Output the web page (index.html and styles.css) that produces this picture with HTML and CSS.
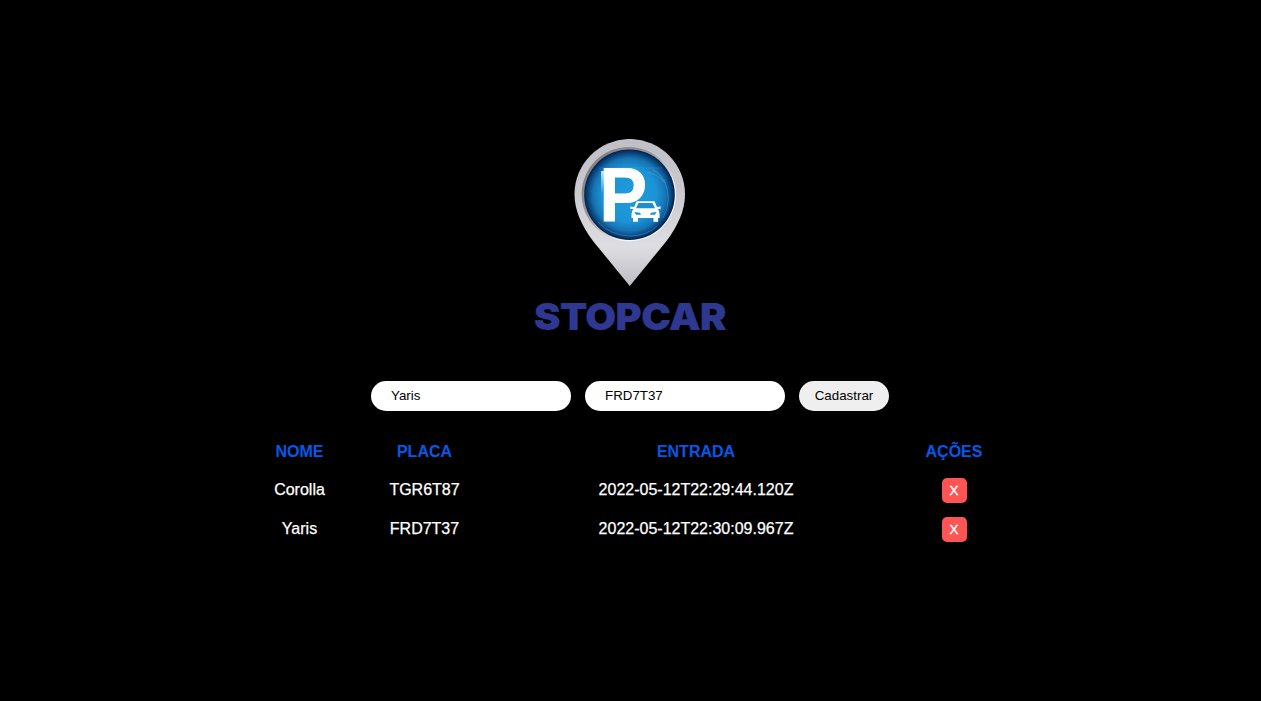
FILE: index.html
```html
<!DOCTYPE html>
<html lang="pt-BR">
<head>
<meta charset="utf-8">
<title>Stopcar</title>
<link rel="stylesheet" href="styles.css">
</head>
<body>
<main class="page">
  <svg class="logo" viewBox="0 0 200 200" role="img" aria-label="Stopcar">
    <defs>
      <linearGradient id="pin" x1="0" y1="0" x2="0" y2="1">
        <stop offset="0" stop-color="#bfbfc5"/>
        <stop offset=".35" stop-color="#c9c9cf"/>
        <stop offset=".73" stop-color="#dedee2"/>
        <stop offset="1" stop-color="#bdbdc4"/>
      </linearGradient>
      <radialGradient id="disc">
        <stop offset="0" stop-color="#209bdd"/>
        <stop offset=".6" stop-color="#1c93d5"/>
        <stop offset=".8" stop-color="#1674b5"/>
        <stop offset=".94" stop-color="#083c71"/>
        <stop offset="1" stop-color="#031f49"/>
      </radialGradient>
      <linearGradient id="bevel" x1="0" y1="0" x2="1" y2="1">
        <stop offset="0" stop-color="#77777c"/>
        <stop offset=".4" stop-color="#98989d"/>
        <stop offset=".7" stop-color="#f4f4f6"/>
        <stop offset="1" stop-color="#fff"/>
      </linearGradient>
      <linearGradient id="shine" x1="0" y1="0" x2="0" y2="1">
        <stop offset="0" stop-color="#bce5fa"/>
        <stop offset="1" stop-color="#209bdd"/>
      </linearGradient>
    </defs>
    <path fill="url(#pin)" d="M99.800 147L63 102C52 87 44.500 72 44.500 55.200A55.250 55.250 0 0 1 155 55.200C155 72 147.500 87 136.500 102Z"/>
    <circle cx="98.800" cy="55.200" r="47.200" fill="url(#bevel)"/>
    <circle cx="99.500" cy="55.700" r="45.300" fill="url(#disc)"/>
    <g fill="none" stroke="#64b7e3" stroke-width=".5" opacity=".75">
      <path d="M68 83Q80 96 99 97Q117 97 127 87M134 40Q143 61 133 79M117 33Q129 36 135 44M123 31Q131 35 134 43"/>
      <path d="M69 29H132" opacity=".5"/>
    </g>
    <path fill="url(#shine)" d="M71 32H74V45L72 55L71 52Z"/>
    <text class="mark" x="69.600" y="82.300" textLength="47.500" lengthAdjust="spacingAndGlyphs">P</text>
    <g>
      <path fill="#fff" stroke="#1b8fcf" stroke-width="1" paint-order="stroke" d="M106.500 62.300H124.500L127 68L130.500 67.500V70H128Q129.500 72 129.500 75V79H128V82.700H123.500V79H108V82.700H103V79H101.500V75Q101.500 72 103.500 70H100.300V67.500L104.200 68Z"/>
      <path fill="#1b8fcf" d="M108.500 64H122.500L125 69.300H106ZM104.500 73L110 73.700L111 75.700H106ZM126.500 73L121 73.700L120 75.700H125Z"/>
    </g>
    <text class="brand" x="4" y="191" textLength="192" lengthAdjust="spacingAndGlyphs">STOPCAR</text>
  </svg>
  <form class="entry">
    <input class="field" type="text" value="Yaris" aria-label="Nome">
    <input class="field" type="text" value="FRD7T37" aria-label="Placa">
    <button class="submit" type="button">Cadastrar</button>
  </form>
  <section class="list">
    <div class="row head"><span>NOME</span><span>PLACA</span><span>ENTRADA</span><span>AÇÕES</span></div>
    <div class="row"><span>Corolla</span><span>TGR6T87</span><span>2022-05-12T22:29:44.120Z</span><button class="remove" type="button">X</button></div>
    <div class="row"><span>Yaris</span><span>FRD7T37</span><span>2022-05-12T22:30:09.967Z</span><button class="remove" type="button">X</button></div>
  </section>
</main>
</body>
</html>
```
FILE: styles.css
```css
* { box-sizing: border-box; }
body {
  margin: 0;
  background: #000;
  color: #fff;
  font: 16px "Liberation Sans", Arial, sans-serif;
}
.page {
  min-height: 701px;
  padding-top: 139px;
  display: flex;
  flex-direction: column;
  align-items: center;
}
.logo { width: 200px; height: 200px; flex: none; margin-right: 1px; }
.mark { font-weight: 700; font-size: 76px; fill: #fff; stroke: #fff; stroke-width: 1px; }
.brand {
  font-family: Inter, "Liberation Sans", sans-serif;
  font-weight: 900;
  font-size: 37px;
  letter-spacing: -.5px;
  fill: #2e3890;
  stroke: #2e3890;
  stroke-width: .2px;
}
.entry {
  display: flex;
  gap: 14px;
  margin: 42px 1px 0 0;
}
.field, .submit {
  height: 30px;
  border: 0;
  border-radius: 15px;
  color: #000;
  font: 13.333px "Liberation Sans", Arial, sans-serif;
}
.field { width: 200px; padding: 0 20px 1px; background: #fff; }
.submit { width: 90px; padding: 0 0 1px; background: #efefef; }
.list {
  width: 800px;
  margin-top: 21px;
  display: flex;
  flex-direction: column;
}
.row {
  height: 39px;
  display: grid;
  grid-template-columns: 138px 112px 431px 85px;
  align-items: center;
  justify-items: center;
  -webkit-text-stroke: .25px #fff;
}
.head {
  height: 38px;
  padding-top: 1px;
  color: #0559ea;
  font-weight: 700;
  -webkit-text-stroke: 0;
}
.remove {
  width: 25px;
  height: 25px;
  margin-top: 2px;
  padding: 0;
  border: 0;
  border-radius: 5px;
  background: #ff5454;
  color: #fff;
  font: 13.333px "Liberation Sans", Arial, sans-serif;
  -webkit-text-stroke: .4px #fff;
}
```
